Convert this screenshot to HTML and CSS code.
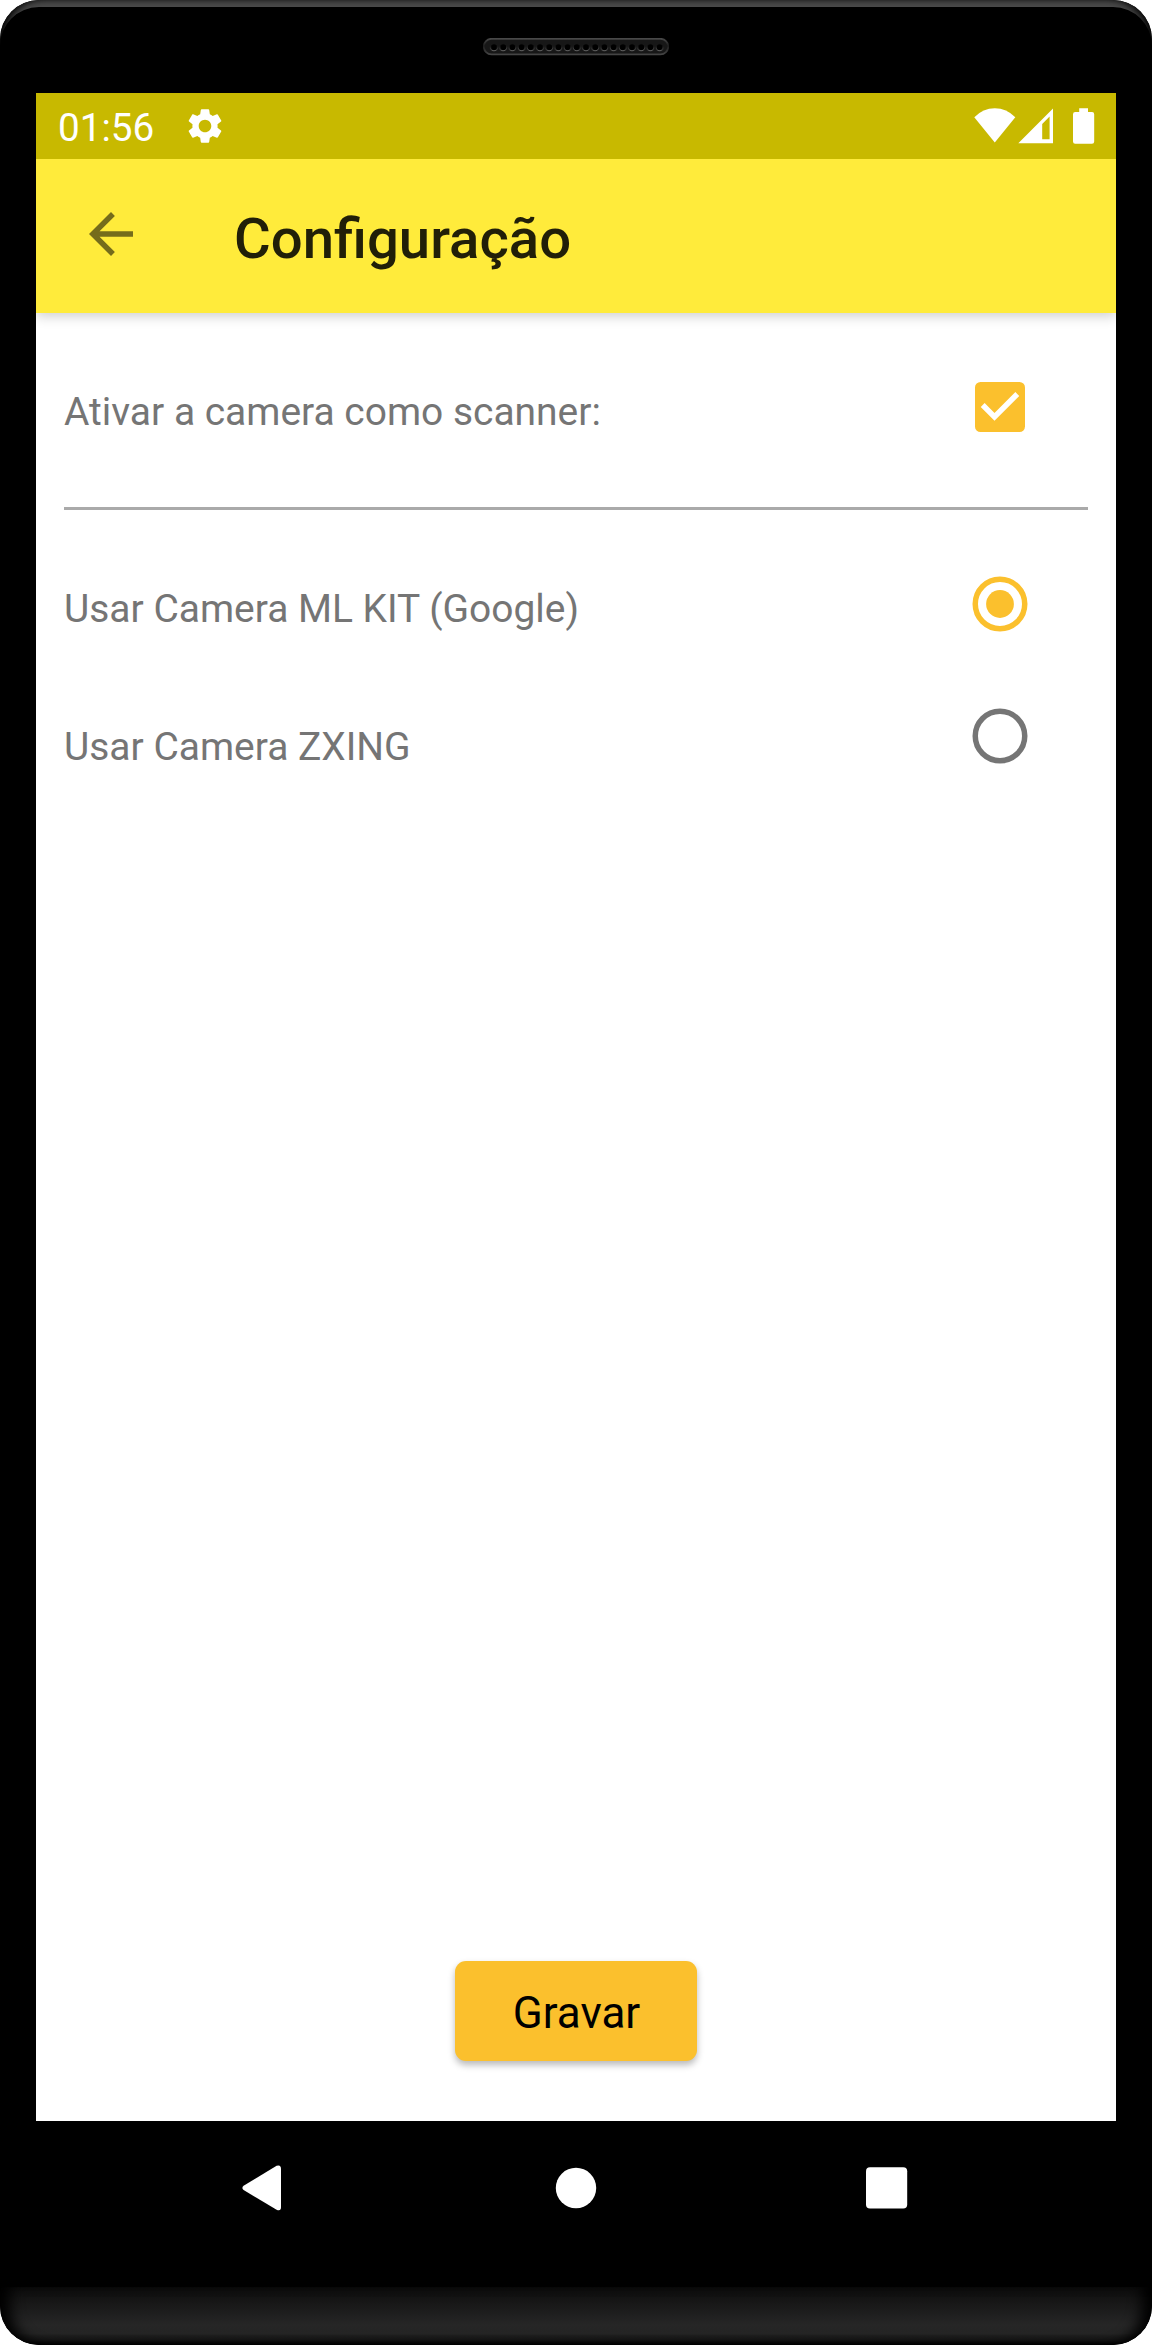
FILE: index.html
```html
<!DOCTYPE html>
<html lang="pt-BR">
<head>
<meta charset="utf-8">
<title>Configuração</title>
<link rel="stylesheet" href="styles.css">
</head>
<body>
<div class="phone">
  <div class="bezel-top">
    <svg class="speaker" width="186" height="18" viewBox="0 0 186 18" aria-hidden="true">
      <defs>
        <linearGradient id="rim" x1="0" y1="0" x2="0" y2="1">
          <stop offset="0" stop-color="#484848"/><stop offset=".45" stop-color="#1c1c1c"/><stop offset="1" stop-color="#444"/>
        </linearGradient>
        <linearGradient id="hole" x1="0" y1="0" x2="0" y2="1">
          <stop offset=".35" stop-color="#181818"/><stop offset="1" stop-color="#646464"/>
        </linearGradient>
        <pattern id="holes" x="6.4" y="0" width="9.2" height="18" patternUnits="userSpaceOnUse">
          <circle cx="4.6" cy="9.2" r="3.5" fill="#000" stroke="url(#hole)"/>
        </pattern>
      </defs>
      <rect x=".8" y=".8" width="184.4" height="15.6" rx="7.8" fill="#171717" stroke="url(#rim)" stroke-width="1.8"/>
      <rect x="6.4" y="3" width="174.8" height="12" fill="url(#holes)"/>
    </svg>
  </div>
  <div class="screen">
    <div class="status-bar">
      <span class="clock">01:56</span>
      <svg class="gear" width="42" height="42" viewBox="0 0 24 24" fill="#fff"><path d="M19.14 12.94c.04-.3.06-.61.06-.94 0-.32-.02-.64-.07-.94l2.03-1.58a.49.49 0 0 0 .12-.61l-1.92-3.32a.488.488 0 0 0-.59-.22l-2.39.96c-.5-.38-1.03-.7-1.62-.94l-.36-2.54a.484.484 0 0 0-.48-.41h-3.84c-.24 0-.43.17-.47.41l-.36 2.54c-.59.24-1.13.57-1.62.94l-2.39-.96c-.22-.08-.47 0-.59.22L2.74 8.87c-.12.21-.08.47.12.61l2.03 1.58c-.05.3-.09.63-.09.94s.02.64.07.94l-2.03 1.58a.49.49 0 0 0-.12.61l1.92 3.32c.12.22.37.29.59.22l2.39-.96c.5.38 1.03.7 1.62.94l.36 2.54c.05.24.24.41.48.41h3.84c.24 0 .44-.17.47-.41l.36-2.54c.59-.24 1.13-.56 1.62-.94l2.39.96c.22.08.47 0 .59-.22l1.92-3.32c.12-.22.07-.47-.12-.61l-2.01-1.58zM12 15.6c-1.98 0-3.6-1.62-3.6-3.6s1.62-3.6 3.6-3.6 3.6 1.62 3.6 3.6-1.62 3.6-3.6 3.6z"/></svg>
      <div class="signals">
        <svg width="42" height="36" viewBox="0 0 42 36" fill="#fff"><path d="M.3 9.3Q9 .3 20.8.3T41.300 9.300L20.800 34.600z"/></svg>
        <svg class="cell" width="36" height="36" viewBox="0 0 36 36" fill="#fff"><path fill-rule="evenodd" d="M.3 35.2 35 .5v34.700zM24.200 16v15.300h7.400V8.600z"/></svg>
        <svg class="battery" width="22" height="37" viewBox="0 0 22 37" fill="#fff"><path d="M6.200.2h8.800v3.900h4a2.200 2.200 0 0 1 2.200 2.200v27.300a2.200 2.200 0 0 1-2.200 2.200H2.200A2.200 2.200 0 0 1 0 33.600V6.300a2.200 2.200 0 0 1 2.200-2.200h4z"/></svg>
      </div>
    </div>
    <header class="app-bar">
      <svg class="back" width="66" height="66" viewBox="0 0 24 24"><path fill="#756c1b" d="M20 11H7.830l5.590-5.590L12 4l-8 8 8 8 1.410-1.410L7.830 13H20v-2z"/></svg>
      <h1 class="title">Configuração</h1>
    </header>
    <main class="content">
      <div class="row row-scanner">
        <span class="label">Ativar a camera como scanner:</span>
        <svg class="control" width="66" height="66" viewBox="0 0 24 24"><rect x="2.910" y="2.910" width="18.180" height="18.180" rx="2" fill="#fbc02d"/><path fill="#fff" d="m10 17-5-5 1.410-1.410L10 14.170l7.590-7.590L19 8z"/></svg>
      </div>
      <div class="row row-mlkit">
        <span class="label">Usar Camera ML KIT (Google)</span>
        <svg class="control" width="66" height="66" viewBox="0 0 24 24"><circle cx="12" cy="12" r="9" fill="none" stroke="#fbc02d" stroke-width="2"/><circle cx="12" cy="12" r="5.050" fill="#fbc02d"/></svg>
      </div>
      <div class="row row-zxing">
        <span class="label">Usar Camera ZXING</span>
        <svg class="control" width="66" height="66" viewBox="0 0 24 24"><circle cx="12" cy="12" r="9" fill="none" stroke="#757575" stroke-width="2"/></svg>
      </div>
      <button class="save" type="button">Gravar</button>
    </main>
  </div>
  <nav class="nav-bar">
    <svg width="40" height="46" viewBox="0 0 40 46" fill="#fff"><path d="M1.600 20.700 34.600.8Q39 -.8 39 4V42Q39 46.500 34.600 44.700L1.600 25Q-.8 22.900 1.600 20.700z"/></svg>
    <svg class="home" width="42" height="42" viewBox="0 0 42 42" fill="#fff"><circle cx="21" cy="21" r="20.200"/></svg>
    <svg width="42" height="42" viewBox="0 0 42 42" fill="#fff"><rect x="0" y=".2" width="41.200" height="41.400" rx="4"/></svg>
  </nav>
  <div class="chin"></div>
</div>
</body>
</html>
```
FILE: styles.css
```css
* {
  box-sizing: border-box;
}

body {
  margin: 0;
  background: #fff;
  font-family: Roboto, sans-serif;
}

svg {
  display: block;
  flex: none;
}

.phone {
  display: flex;
  flex-direction: column;
  width: 1152px;
  height: 2345px;
  overflow: hidden;
  border-radius: 39px;
  background: #000;
}

.bezel-top {
  display: flex;
  justify-content: center;
  height: 93px;
  padding: 38px 1px 0 0;
  border-radius: 39px 39px 0 0;
  box-shadow: inset 8px 0 8px -3px #000, inset -8px 0 8px -3px #000, inset 0 7px 0 #4a4a4a;
}

.screen {
  display: flex;
  flex-direction: column;
  width: 1080px;
  height: 2028px;
  margin: 0 36px;
  background: #fff;
}

.status-bar {
  display: flex;
  align-items: flex-start;
  height: 66px;
  padding: 12px 21px 0 22px;
  background: #c8b900;
  color: #fff;
}

.clock {
  width: 98px;
  font-size: 38.7px;
  line-height: 46px;
}

.gear {
  margin: 0 0 0 28px;
}

.signals {
  display: flex;
  align-items: flex-start;
  margin: 3px 0 0 auto;
}

.cell {
  margin-left: 2px;
}

.battery {
  margin-left: 19px;
}

.app-bar {
  display: flex;
  align-items: flex-start;
  height: 154px;
  padding: 42px 42px 0;
  background: #ffeb3b;
  box-shadow: 0 3px 12px rgba(0, 0, 0, .2);
  clip-path: inset(0 0 -20px 0);
}

.title {
  margin: 6px 0 0 90px;
  color: #211f08;
  font-size: 56.3px;
  font-weight: 500;
  line-height: 64px;
}

.content {
  display: flex;
  flex: 1;
  flex-direction: column;
  padding: 0 28px 60px;
}

.row {
  display: flex;
  align-items: flex-start;
  justify-content: space-between;
  height: 138px;
  padding-right: 55px;
}

.row-scanner {
  height: 197px;
  border-bottom: 3px solid #aaa;
}

.label {
  margin-top: 73px;
  color: #757575;
  font-size: 38.95px;
  line-height: 52px;
}

.control {
  margin-top: 61px;
}

.row-zxing .control {
  margin-top: 55px;
}

.save {
  align-self: center;
  width: 242px;
  height: 100px;
  margin-top: auto;
  padding: 4px 0 0 1px;
  border: 0;
  border-radius: 11px;
  background: #fbc02d;
  box-shadow: 0 4px 7px rgba(0, 0, 0, .28);
  color: #000;
  font-family: inherit;
  font-size: 44px;
  line-height: 52px;
}

.nav-bar {
  display: flex;
  align-items: center;
  justify-content: space-between;
  height: 132px;
  padding: 1px 244px 0 242px;
}

.home {
  margin-left: 3px;
}

.chin {
  height: 58px;
  margin-top: 34px;
  border-radius: 0 0 39px 39px;
  background: linear-gradient(#0d0d0d, #1a1a1a 35%, #262626 65%, #242424 80%, #141414 92%, #000);
  box-shadow: inset 16px 0 14px -6px #000, inset -16px 0 14px -6px #000;
}
```
